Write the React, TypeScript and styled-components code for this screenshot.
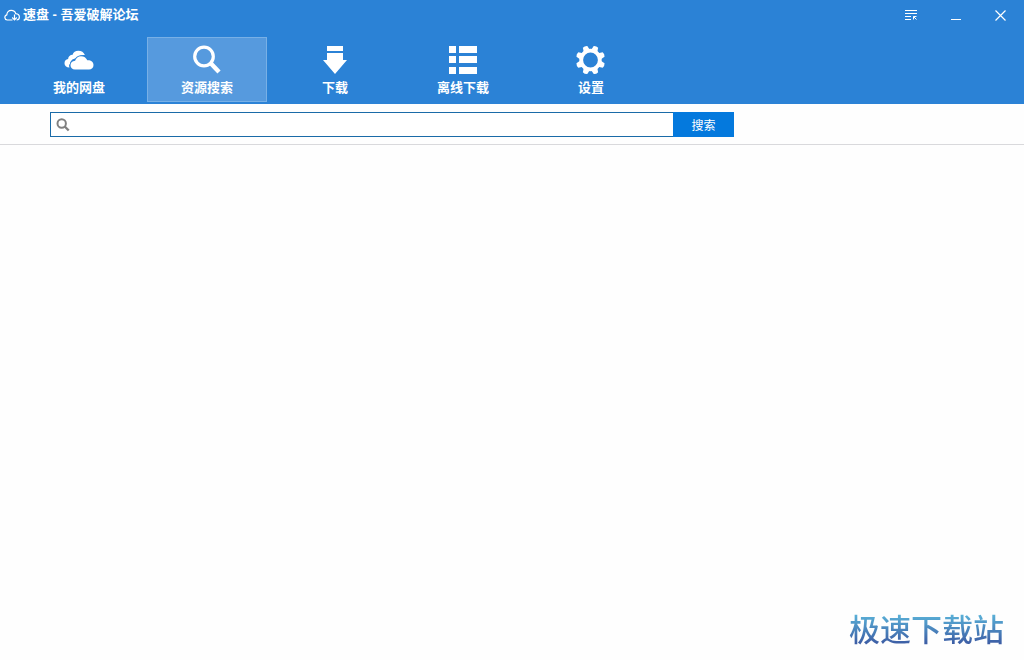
import React, { useState } from "react";
import styled, { createGlobalStyle } from "styled-components";

const GlobalStyle = createGlobalStyle`
  * { box-sizing: border-box; }
  body {
    margin: 0;
    background: #fefefe;
    font-family: "Liberation Sans", "Noto Sans CJK SC", sans-serif;
  }
  button, input { font-family: inherit; }
`;

const Window = styled.div`
  display: flex;
  flex-direction: column;
  min-height: 100vh;
  background: #fefefe;
`;

const Header = styled.header`
  background: #2b82d6;
  color: #fff;
  padding-bottom: 2px;
`;

const TitleBar = styled.div`
  display: flex;
  align-items: center;
  height: 30px;
  padding: 0 1px 0 4px;
`;

const Title = styled.h1`
  flex: 1;
  margin: 0 0 0 3px;
  font-size: 13px;
  line-height: 20px;
  font-weight: 700;
`;

const WindowButton = styled.button`
  display: flex;
  align-items: center;
  justify-content: center;
  width: 45px;
  height: 30px;
  padding: 0;
  border: 0;
  background: transparent;
  color: #fff;
`;

const Nav = styled.nav`
  display: flex;
  gap: 8px;
  padding: 7px 0 0 19px;
`;

const NavButton = styled.button<{ $active: boolean }>`
  display: flex;
  flex-direction: column;
  align-items: center;
  gap: 3px;
  width: 120px;
  height: 65px;
  padding: 5px 0 0;
  border: 1px solid ${(p) => (p.$active ? "#78b0e6" : "transparent")};
  background: ${(p) => (p.$active ? "#569ade" : "transparent")};
  color: #fff;
  font-size: 13px;
  line-height: 20px;
  font-weight: 700;
`;

const SearchBar = styled.form`
  display: flex;
  padding: 8px 50px 7px;
  border-bottom: 1px solid #d9d9dc;
`;

const SearchField = styled.label`
  display: flex;
  align-items: center;
  flex: 1;
  max-width: 623px;
  height: 25px;
  padding-left: 5px;
  border: 1px solid #1a6ba8;
  border-right: 0;
  background: #fff;
`;

const SearchInput = styled.input`
  flex: 1;
  min-width: 0;
  height: 20px;
  padding: 0 6px;
  border: 0;
  outline: 0;
  background: transparent;
  font-size: 12px;
`;

const SearchButton = styled.button`
  width: 61px;
  height: 25px;
  padding: 3px 0 0;
  border: 0;
  background: #0479dd;
  color: #fff;
  font-size: 12px;
  line-height: 22px;
`;

const Results = styled.main`
  display: flex;
  flex: 1;
  align-items: flex-end;
  justify-content: flex-end;
  padding: 0 20px 12px;
`;

const SiteMark = styled.div`
  font-size: 31px;
  line-height: 40px;
  font-weight: 500;
  font-family: "Noto Sans CJK SC", sans-serif;
  color: transparent;
  background: linear-gradient(#5cb8dc 10%, #3c5ca4 90%);
  background-clip: text;
  -webkit-background-clip: text;
`;

const LogoIcon = () => (
  <svg width="16" height="14" viewBox="0 0 16 14" fill="none" stroke="#fff" strokeWidth="1.2" aria-hidden>
    <path d="M8.500 12H3.200A2.600 2.600 0 0 1 2.800 6.900C2.800 4.200 4.800 2.400 7.200 2.400C9.400 2.400 11.200 3.700 11.700 5.700C13.900 5.900 15.400 7.200 15.400 9.100C15.400 10.900 14.200 12 12.600 12" />
    <path d="M10.500 6.500V11.500M8.200 9.500L10.500 11.800L12.800 9.500" />
  </svg>
);

const CloudIcon = () => (
  <svg width="32" height="32" viewBox="0 0 32 32" fill="#fff" aria-hidden>
    <path d="M6.500 24.500C3.300 24.500 1.500 22.700 1.500 20.200C1.500 17.900 3 16.300 5.100 16C5.200 13.400 7.200 11.700 9.600 11.700C10.300 9.100 12.500 7.700 15.300 7.700C18.400 7.700 20.800 9.100 21.900 12C17.500 11.500 14.500 13 13.200 15.600C9.600 15.600 7.500 17.800 7.200 20.600C6 21.800 5.700 23 6.500 24.500Z" />
    <path d="M12 26.500C9.300 26.500 7.500 24.800 7.500 22.300C7.500 19.700 9.400 17.800 12.100 17.700C12.900 15 15.200 13.200 18 13.200C20.900 13.200 23.300 14.800 24.300 17.300C27.800 17 30.500 19 30.500 22C30.500 24.800 28.600 26.500 26 26.500Z" stroke="#2b82d6" strokeWidth="1.500" paintOrder="stroke" />
  </svg>
);

const SearchIcon = () => (
  <svg width="32" height="32" viewBox="0 0 32 32" fill="none" stroke="#fff" aria-hidden>
    <circle cx="13" cy="13.500" r="9.300" strokeWidth="3.200" />
    <path d="M19.500 20L28 29" strokeWidth="4.400" />
  </svg>
);

const DownloadIcon = () => (
  <svg width="32" height="32" viewBox="0 0 32 32" fill="#fff" aria-hidden>
    <path d="M8 3H24V8H8ZM8 10H24V17H28L16 31L4 17H8Z" />
  </svg>
);

const ListIcon = () => (
  <svg width="32" height="32" viewBox="0 0 32 32" fill="#fff" aria-hidden>
    {[3, 13, 24].map((y) => (
      <path key={y} d={`M2 ${y}H9V${y + 7}H2ZM12 ${y}H30V${y + 7}H12Z`} />
    ))}
  </svg>
);

const GearIcon = () => (
  <svg width="32" height="32" viewBox="0 0 32 32" aria-hidden>
    <circle cx="15.500" cy="17" r="9.300" fill="none" stroke="#fff" strokeWidth="3.800" />
    {[0, 1, 2, 3, 4, 5, 6, 7].map((i) => (
      <path
        key={i}
        d="M12.200 7.500L13.100 2.800Q15.500 1.600 17.900 2.800L18.800 7.500Z"
        fill="#fff"
        transform={`rotate(${22.5 + i * 45} 15.5 17)`}
      />
    ))}
  </svg>
);

const tabs = [
  { label: "我的网盘", Icon: CloudIcon },
  { label: "资源搜索", Icon: SearchIcon },
  { label: "下载", Icon: DownloadIcon },
  { label: "离线下载", Icon: ListIcon },
  { label: "设置", Icon: GearIcon },
];

export default function App() {
  const [active, setActive] = useState(1);
  const [query, setQuery] = useState("");

  return (
    <Window>
      <GlobalStyle />
      <Header>
        <TitleBar>
          <LogoIcon />
          <Title>速盘 - 吾爱破解论坛</Title>
          <WindowButton type="button" aria-label="菜单">
            <svg width="12" height="12" viewBox="0 0 12 12" fill="none" stroke="currentColor" aria-hidden>
              <path d="M0 1.500H12M0 4.500H12M0 7.500H6M0 10.500H6M8.500 10.500V7.500H11.500M8.500 7.500L11.500 10.500" />
            </svg>
          </WindowButton>
          <WindowButton type="button" aria-label="最小化">
            <svg width="10" height="12" viewBox="0 0 10 12" stroke="currentColor" aria-hidden>
              <path d="M0 10.500H10" />
            </svg>
          </WindowButton>
          <WindowButton type="button" aria-label="关闭">
            <svg width="11" height="11" viewBox="0 0 11 11" stroke="currentColor" strokeWidth="1.200" aria-hidden>
              <path d="M0.500 0.500L10.500 10.500M10.500 0.500L0.500 10.500" />
            </svg>
          </WindowButton>
        </TitleBar>
        <Nav>
          {tabs.map(({ label, Icon }, i) => (
            <NavButton key={label} type="button" $active={i === active} onClick={() => setActive(i)}>
              <Icon />
              {label}
            </NavButton>
          ))}
        </Nav>
      </Header>
      <SearchBar onSubmit={(e) => e.preventDefault()}>
        <SearchField>
          <svg width="14" height="14" viewBox="0 0 14 14" fill="none" stroke="#808080" aria-hidden>
            <circle cx="5.700" cy="5.500" r="4.200" strokeWidth="2" />
            <path d="M8.700 8.500L12.700 12.500" strokeWidth="2.400" />
          </svg>
          <SearchInput aria-label="搜索" value={query} onChange={(e) => setQuery(e.target.value)} />
        </SearchField>
        <SearchButton type="submit">搜索</SearchButton>
      </SearchBar>
      <Results>
        <SiteMark>极速下载站</SiteMark>
      </Results>
    </Window>
  );
}
